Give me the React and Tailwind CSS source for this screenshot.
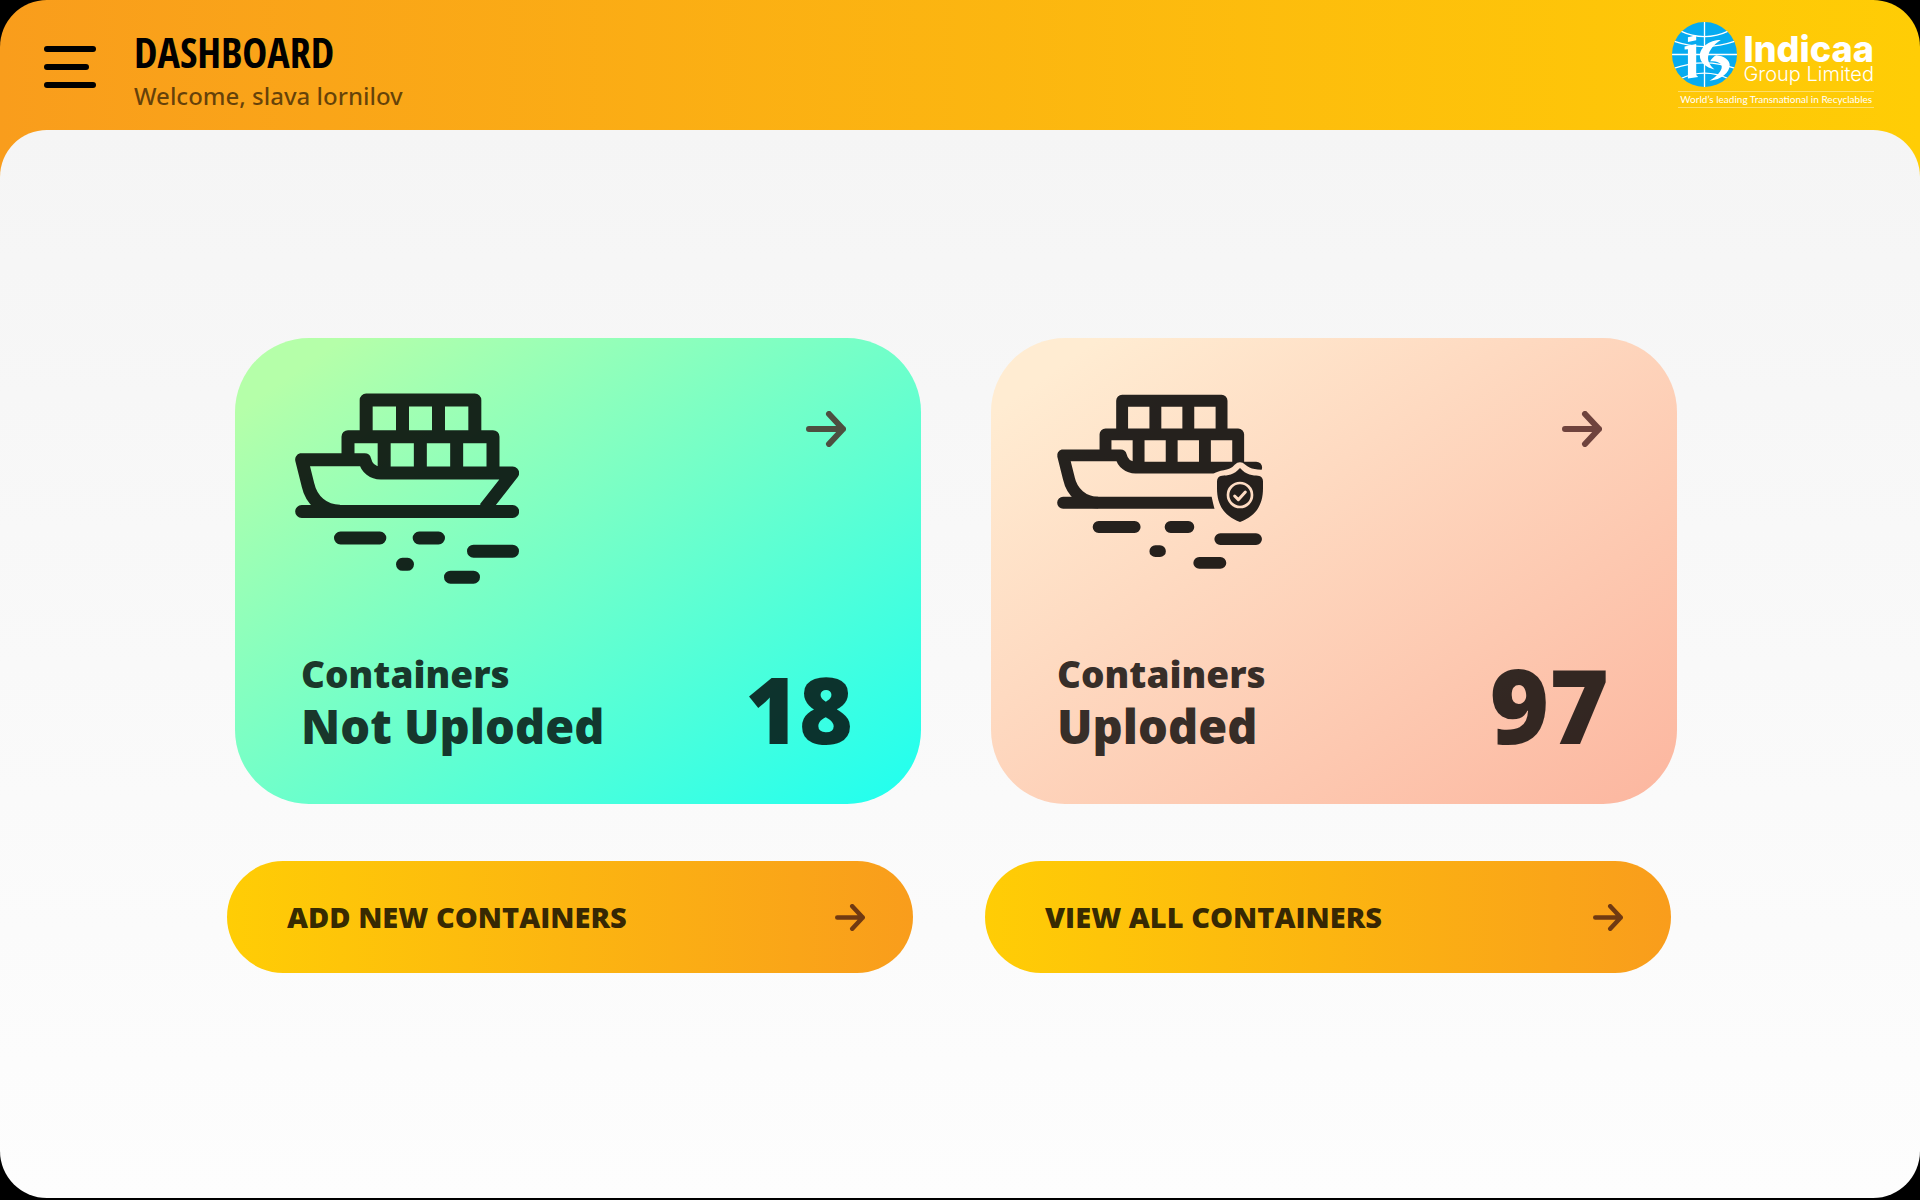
import React from "react";

function ShipShape() {
  return (
    <g fill="none" stroke="currentColor" strokeWidth="39" strokeLinejoin="round">
      <path d="M288.5 200V90H614.5V200M397.5 90V200M505.5 90V200" />
      <path d="M234 262V200H669V309M342.5 200V309M451 200V309M560 200V309" />
      <path d="M210 424C160 424 124 390 114 345L95 269H284C290 295 310 309 332 309H728L645 415" />
      <path
        strokeLinecap="round"
        d="M95 424.5H728M211.5 504H329.5M447.5 504H505.5M610.5 543.5H727.5M397.5 583H412.5M541.5 621.5H610.5"
      />
    </g>
  );
}

function ShipIcon() {
  return (
    <svg viewBox="75 69 672 573" className="h-[191px] w-56 text-black" aria-hidden="true">
      <g opacity="0.85">
        <ShipShape />
      </g>
    </svg>
  );
}

function ShipCheckedIcon() {
  return (
    <svg viewBox="63 69 672 573" className="h-[191px] w-56 text-black" aria-hidden="true">
      <mask id="ship-cut" maskUnits="userSpaceOnUse" x="63" y="60" width="672" height="590">
        <rect x="63" y="60" width="672" height="590" fill="white" />
        <path
          fill="black"
          d="M549 313C565 297 598 305 614 284Q630 270 646 284C662 298 680 299 720 300V450H565C556 430 549 400 545 380Z"
        />
      </mask>
      <mask id="shield-cut" maskUnits="userSpaceOnUse" x="550" y="280" width="160" height="190">
        <rect x="550" y="280" width="160" height="190" fill="white" />
        <g fill="none" stroke="black" strokeLinecap="round" strokeLinejoin="round">
          <circle cx="630" cy="375" r="36" strokeWidth="8" />
          <path d="M614 378L625 389L646 366" strokeWidth="9" />
        </g>
      </mask>
      <g opacity="0.85">
        <g mask="url(#ship-cut)">
          <g transform="translate(12.4 10) scale(0.915)">
            <ShipShape />
          </g>
        </g>
        <path
          mask="url(#shield-cut)"
          fill="currentColor"
          d="M630 294C648 315 670 317 684 317Q699 319 699 334V355C699 405 678 438 630 456C582 438 561 405 561 355V334Q561 319 576 317C592 317 612 315 630 294Z"
        />
      </g>
    </svg>
  );
}

function Arrow({ className }) {
  return (
    <svg
      viewBox="0 0 40 36"
      className={className}
      fill="none"
      stroke="currentColor"
      strokeWidth="6"
      strokeLinecap="round"
      strokeLinejoin="round"
      aria-hidden="true"
    >
      <path d="M3 18H37M23 3L37 18L23 33" />
    </svg>
  );
}

function Logo() {
  return (
    <div className="font-['Inter',sans-serif] text-white">
      <div className="flex items-start gap-1.5">
        <svg viewBox="93 66 196 196" className="size-[65px] shrink-0" aria-hidden="true">
          <clipPath id="globe">
            <circle cx="191" cy="164" r="98" />
          </clipPath>
          <g clipPath="url(#globe)">
            <rect x="93" y="66" width="196" height="196" fill="#06abf0" />
            <g fill="none" stroke="white" strokeWidth="4">
              <path d="M191 66V262M93 164H289" />
              <path d="M116 92Q191 128 266 92M98 124Q191 156 284 124M98 206Q191 172 284 206M116 238Q191 202 266 238" />
            </g>
            <g fill="white">
              <path d="M141 112L166 106V121L141 126Z" />
              <path d="M131 140L166 132V226L172 232L141 236V148L131 149Z" />
              <path d="M240 120C205 120 177 142 177 168C177 188 196 204 221 209C206 196 200 183 202 170C205 150 219 134 240 120Z" />
              <path d="M226 166C250 168 267 180 267 196C267 218 242 241 206 243C230 229 243 214 243 201C243 190 232 184 208 184C213 176 219 170 226 166Z" />
            </g>
          </g>
        </svg>
        <div className="pt-2.5">
          <div className="text-[36px] leading-[34px] font-extrabold">Indicaa</div>
          <div className="text-[20px] leading-4 font-light">Group Limited</div>
        </div>
      </div>
      <div className="mt-1 ml-1.5 border-y border-white/40 text-center font-['Lato',sans-serif] text-[10px] leading-[15px] whitespace-nowrap">
        World’s leading Transnational in Recyclables
      </div>
    </div>
  );
}

const cards = [
  {
    status: "Not Uploded",
    count: 18,
    Icon: ShipIcon,
    surface: "bg-linear-145/srgb from-[#b5ffa9] from-8% to-[#1ffff0]",
    arrow: "text-[#4d4f40]",
    number: "text-[92px] leading-[90px]",
  },
  {
    status: "Uploded",
    count: 97,
    Icon: ShipCheckedIcon,
    surface: "bg-linear-145/srgb from-[#ffecd2] from-8% to-[#fcb69f]",
    arrow: "text-[#6f433d]",
    number: "text-[102px] leading-[98px]",
  },
];

const actions = ["ADD NEW CONTAINERS", "VIEW ALL CONTAINERS"];

export default function App() {
  return (
    <div className="flex min-h-screen flex-col bg-black pb-0.5 font-['Open_Sans',sans-serif]">
      <header className="flex h-[178px] items-start justify-between rounded-t-[47px] bg-linear-to-r/srgb from-[#f99d1c] to-[#ffcd05] pr-[46px] pl-11">
        <div className="flex items-start gap-[38px]">
          <button type="button" aria-label="Open menu" className="mt-[46px] flex flex-col gap-3">
            <span className="h-1.5 w-[52px] rounded-full bg-black" />
            <span className="h-1.5 w-[45px] rounded-full bg-black" />
            <span className="h-1.5 w-[52px] rounded-full bg-black" />
          </button>
          <div className="pt-7">
            <h1 className="font-['Open_Sans_Condensed','Roboto_Condensed',sans-serif] text-[42px] leading-[48px] font-bold">
              DASHBOARD
            </h1>
            <p className="font-['Noto_Sans',sans-serif] text-2xl leading-10 font-medium text-black/60">
              Welcome, slava lornilov
            </p>
          </div>
        </div>
        <div className="pt-[22px]">
          <Logo />
        </div>
      </header>

      <main className="-mt-12 flex-1 rounded-[47px] bg-linear-to-b/srgb from-[#f5f5f5] to-[#fdfdfd] pt-52 pb-16">
        <section className="grid grid-cols-2 gap-[70px] pr-[243px] pl-[235px]">
          {cards.map(({ status, count, Icon, surface, arrow, number }) => (
            <a
              key={status}
              href="#containers"
              className={`flex min-h-[466px] flex-col justify-between rounded-[74px] pt-[55px] pb-[50px] ${surface}`}
            >
              <div className="flex items-start justify-between pr-[75px] pl-[60px]">
                <Icon />
                <Arrow className={`mt-[18px] h-9 w-10 ${arrow}`} />
              </div>
              <div className="flex items-end justify-between pr-[68px] pl-[66px] text-black/80">
                <div className="font-extrabold">
                  <div className="text-[37px] leading-[48px]">Containers</div>
                  <div className="text-[47px] leading-[56px]">{status}</div>
                </div>
                <div className={`font-extrabold ${number}`}>{count}</div>
              </div>
            </a>
          ))}
        </section>

        <section className="mt-[57px] grid grid-cols-2 gap-[72px] pr-[249px] pl-[227px]">
          {actions.map((label) => (
            <button
              key={label}
              type="button"
              className="flex h-28 items-center justify-between rounded-full bg-linear-to-r/srgb from-[#ffcd05] to-[#f99d1c] pr-12 pl-[60px]"
            >
              <span className="text-[29px] leading-10 font-extrabold text-black/80">{label}</span>
              <Arrow className="h-[27px] w-[30px] text-[#703a12]" />
            </button>
          ))}
        </section>
      </main>
    </div>
  );
}
